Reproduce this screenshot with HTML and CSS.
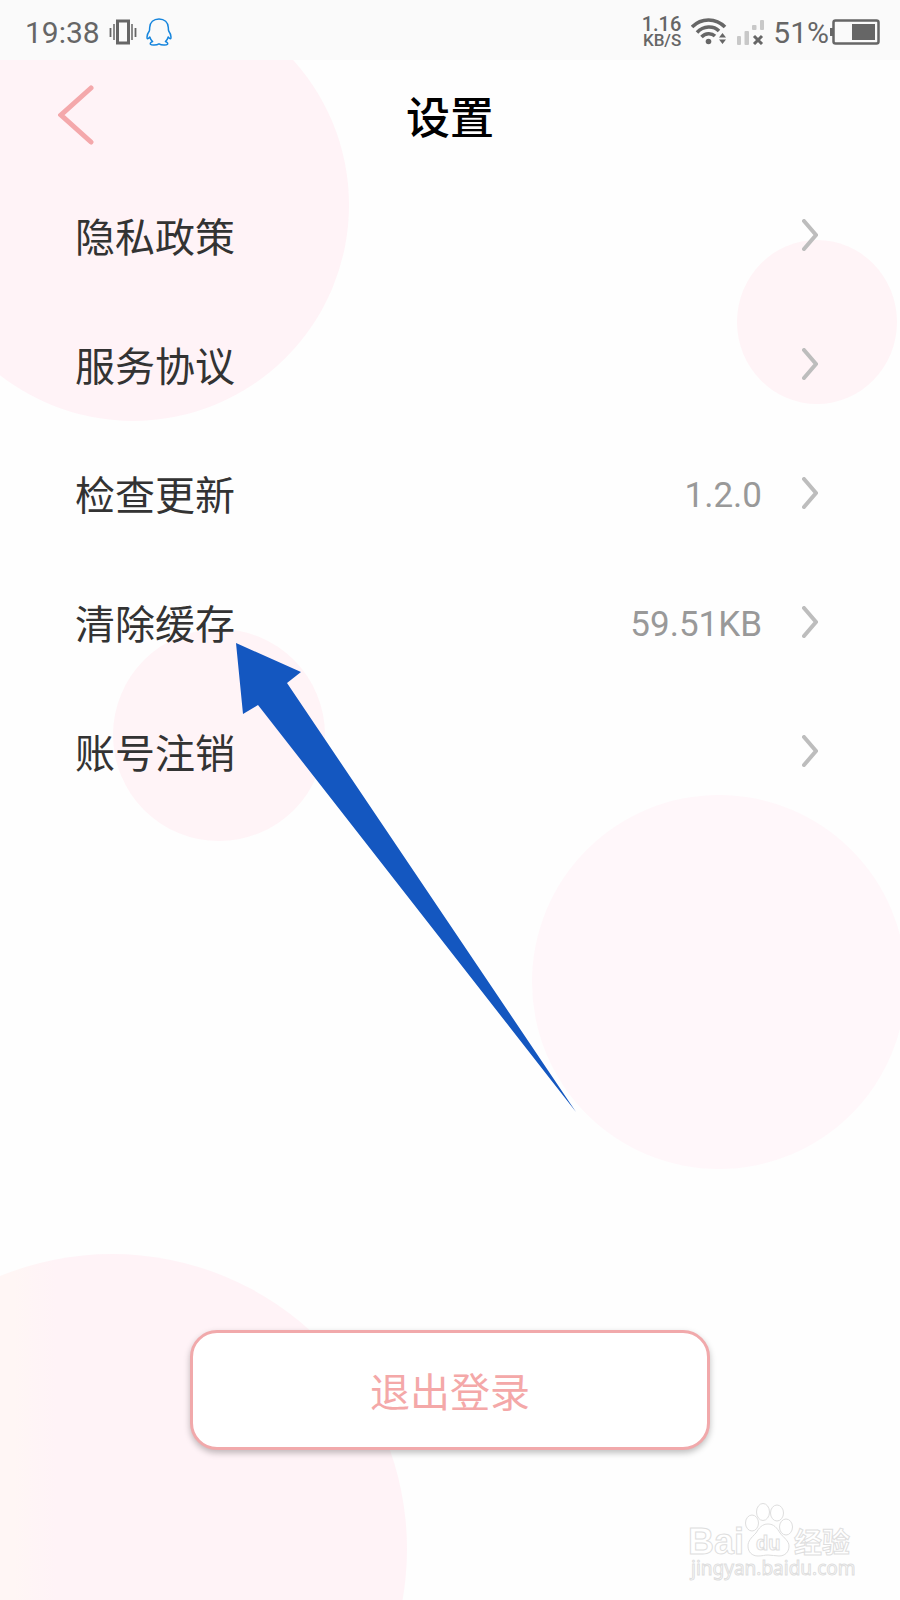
FILE: index.html
```html
<!DOCTYPE html>
<html lang="zh-CN">
<head>
<meta charset="utf-8">
<meta name="viewport" content="width=device-width, initial-scale=1">
<title>设置</title>
<link rel="stylesheet" href="styles.css">
</head>
<body>
<div class="screen">
  <svg class="backdrop" viewBox="0 0 900 1600" aria-hidden="true">
    <defs>
      <linearGradient id="warm" gradientUnits="userSpaceOnUse" x1="0" y1="0" x2="56" y2="0">
        <stop offset="0.25" stop-color="#fff6f5"/>
        <stop offset="1" stop-color="#fff3f7"/>
      </linearGradient>
    </defs>
    <circle cx="133" cy="205" r="216" fill="#fff3f7"/>
    <ellipse cx="817" cy="322" rx="80" ry="82" fill="#fff4f7"/>
    <circle cx="219" cy="735" r="106" fill="#fff4f7"/>
    <circle cx="719" cy="982" r="187" fill="#fff7fa"/>
    <circle cx="112" cy="1549" r="295" fill="url(#warm)"/>
  </svg>

  <header class="status">
    <span class="status-text">19:38</span>
    <svg class="vibrate" width="28" height="26" viewBox="0 0 28 26" fill="none" stroke="#666" aria-hidden="true">
      <rect x="8.500" y="2" width="11" height="22" stroke-width="3"/>
      <path d="M5 5v16M23 5v16" stroke-width="1.500"/>
      <path d="M1.500 9v9M26.500 9v9" stroke-width="1.800"/>
    </svg>
    <svg class="penguin" width="26" height="28" viewBox="0 0 26 28" fill="none" stroke="#1585dd" stroke-width="1.500" stroke-linejoin="round" aria-hidden="true">
      <path d="M13 1C7.500 1 4 4.500 3.700 9.500C3.500 11 3.800 12 3.300 13C1.500 15.500.6 18 1.200 20.500C1.600 21.500 3 20 3.800 19C4.300 21 5.300 22.500 6.600 23.500C4.500 24.300 4 25.300 4.500 26.300C5.500 27.500 10.500 27.300 13 25.800C15.500 27.300 20.500 27.500 21.500 26.300C22 25.300 21.500 24.300 19.400 23.500C20.700 22.500 21.700 21 22.200 19C23 20 24.400 21.500 24.800 20.500C25.400 18 24.500 15.500 22.700 13C22.200 12 22.500 11 22.300 9.500C22 4.500 18.500 1 13 1Z"/>
    </svg>
    <div class="speed"><span class="speed-value">1.16</span><span class="speed-unit">KB/S</span></div>
    <svg class="wifi" width="36" height="28" viewBox="0 0 36 28" fill="none" stroke="#666" stroke-width="3.500" aria-hidden="true">
      <path d="M1 9C10-.5 25-.5 34 9"/>
      <path d="M6 14.500C12.500 7.500 22.500 7.500 28 13"/>
      <path d="M10.500 19C14.500 14.700 20.500 14.700 24 18"/>
      <circle cx="17.500" cy="23.500" r="2.800" fill="#666" stroke="none"/>
      <path d="M28 19.500h7L31.500 15zM28 21.500h7L31.500 26z" fill="#666" stroke="none"/>
    </svg>
    <svg class="signal" width="28" height="26" viewBox="0 0 28 26" aria-hidden="true">
      <g fill="#c8c8c8">
        <rect x="0" y="17" width="4" height="9" rx="1"/>
        <rect x="7.500" y="12" width="4.500" height="14" rx="1"/>
        <rect x="15" y="6" width="4.500" height="5" rx="1"/>
        <rect x="23" y="1" width="4" height="10" rx="1"/>
      </g>
      <path d="M17 17l8 8M25 17l-8 8" stroke="#666" stroke-width="3"/>
    </svg>
    <span class="status-text">51%</span>
    <svg class="battery" width="50" height="26" viewBox="0 0 50 26" aria-hidden="true">
      <rect x="3.500" y="1.500" width="45" height="23" rx="2" fill="none" stroke="#666" stroke-width="2.500"/>
      <rect x="0" y="9" width="3" height="8" fill="#666"/>
      <rect x="22" y="5" width="23" height="16" fill="#666"/>
    </svg>
  </header>

  <nav class="titlebar">
    <button class="back" type="button" aria-label="返回">
      <svg width="36" height="62" viewBox="0 0 36 62" fill="none" stroke="#f4a8ab" stroke-width="5" stroke-linecap="round" aria-hidden="true"><path d="M33 4L3 31L33 58"/></svg>
    </button>
    <h1 class="title">设置</h1>
  </nav>

  <main class="content">
    <ul class="settings">
      <li><a class="row" href="#privacy"><span class="label">隐私政策</span><svg class="chevron" viewBox="0 0 16 32" aria-hidden="true"><path d="M2 2L14 16L2 30"/></svg></a></li>
      <li><a class="row" href="#terms"><span class="label">服务协议</span><svg class="chevron" viewBox="0 0 16 32" aria-hidden="true"><path d="M2 2L14 16L2 30"/></svg></a></li>
      <li><a class="row" href="#update"><span class="label">检查更新</span><span class="value">1.2.0</span><svg class="chevron" viewBox="0 0 16 32" aria-hidden="true"><path d="M2 2L14 16L2 30"/></svg></a></li>
      <li><a class="row" href="#cache"><span class="label">清除缓存</span><span class="value">59.51KB</span><svg class="chevron" viewBox="0 0 16 32" aria-hidden="true"><path d="M2 2L14 16L2 30"/></svg></a></li>
      <li><a class="row" href="#delete"><span class="label">账号注销</span><svg class="chevron" viewBox="0 0 16 32" aria-hidden="true"><path d="M2 2L14 16L2 30"/></svg></a></li>
    </ul>
    <button class="logout" type="button">退出登录</button>
  </main>

  <footer class="brand">
    <svg width="170" height="84" viewBox="0 0 170 84" fill="#fff" stroke="#dedede" stroke-width="1">
      <text class="brand-text" x="3" y="54" font-size="36">Bai</text>
      <text class="brand-cn" x="109" y="53" font-size="28">经验</text>
      <ellipse cx="67" cy="23" rx="6.500" ry="8"/>
      <ellipse cx="78" cy="12" rx="6.500" ry="8.500"/>
      <ellipse cx="92" cy="13" rx="6.500" ry="8"/>
      <ellipse cx="101" cy="27" rx="6.500" ry="8"/>
      <path d="M83 24C77 24 74 28 71 33C66 38 63 41 63 46C63 52 67 56 73 56C77 56 80 55 83 55C87 55 90 56 94 56C100 56 104 52 104 46C104 41 99 38 95 33C92 28 89 24 83 24Z"/>
      <text class="brand-text" x="71" y="50" font-size="20">du</text>
      <text class="brand-url" x="6" y="75" font-size="19">jingyan.baidu.com</text>
    </svg>
  </footer>

  <svg class="pointer" viewBox="0 0 900 1600" aria-hidden="true"><path d="M236 643L301 672L287 683L576 1112L258 705L243 714Z" fill="#1457c0"/></svg>
</div>
</body>
</html>
```
FILE: styles.css
```css
* { box-sizing: border-box; }

body {
  margin: 0;
  background: #fefefe;
  color: #333;
  font-family: "Noto Sans CJK SC", sans-serif;
}

.screen {
  position: relative;
  display: flex;
  flex-direction: column;
  min-height: 100vh;
  overflow: hidden;
}

.backdrop,
.pointer {
  position: absolute;
  top: 0;
  left: 0;
  width: 100%;
  pointer-events: none;
}

.status,
.titlebar,
.content,
.brand { position: relative; }

.status {
  display: flex;
  align-items: center;
  height: 60px;
  padding: 4px 20px 0 25px;
  background: #fafafa;
  color: #666;
  font-family: Roboto, sans-serif;
}

.status-text {
  padding-top: 2px;
  font-size: 30px;
  line-height: 36px;
}

.vibrate { margin-left: 9px; }
.penguin { margin-left: 9px; }

.speed {
  display: flex;
  flex-direction: column;
  align-items: flex-end;
  margin-left: auto;
  font-weight: 500;
}

.speed-value { font-size: 20px; line-height: 16px; }
.speed-unit { font-size: 17px; line-height: 16px; }

.wifi { margin-left: 10px; }
.signal { margin: 0 8px 0 10px; }
.battery { margin-left: 1px; }

.titlebar {
  display: flex;
  align-items: center;
  justify-content: center;
  height: 110px;
}

.back {
  position: absolute;
  top: 24px;
  left: 58px;
  padding: 0;
  border: 0;
  background: none;
}

.back svg { display: block; }

.title {
  margin: 0;
  color: #000;
  font-size: 44px;
  font-weight: 500;
  line-height: 60px;
}

.content {
  display: flex;
  flex-direction: column;
}

.settings {
  margin: 0;
  padding: 0;
  list-style: none;
}

.row {
  display: flex;
  align-items: center;
  height: 129px;
  padding: 0 82px 0 75px;
  color: inherit;
  text-decoration: none;
}

.label {
  margin-right: auto;
  font-size: 40px;
  line-height: 56px;
}

.value {
  margin-right: 40px;
  padding-top: 6px;
  color: #999;
  font-family: Roboto, sans-serif;
  font-size: 35px;
  line-height: 44px;
}

.chevron {
  width: 16px;
  height: 32px;
  fill: none;
  stroke: #bdbdbd;
  stroke-width: 4;
  stroke-linecap: round;
}

.logout {
  height: 120px;
  margin: 515px 190px 0;
  border: 3px solid #f1a9ab;
  border-radius: 27px;
  background: #fff;
  box-shadow: 0 3px 6px rgba(0, 0, 0, 0.25);
  color: #f4a8a8;
  font-family: inherit;
  font-size: 40px;
  line-height: 56px;
}

.brand {
  display: flex;
  justify-content: flex-end;
  margin-top: 50px;
  padding: 0 45px 16px 0;
}

.brand-text { font-family: "Liberation Sans", sans-serif; font-weight: 700; }
.brand-cn { font-family: "Noto Sans CJK SC", sans-serif; font-weight: 700; }
.brand-url { font-family: "Noto Sans", sans-serif; }
```
